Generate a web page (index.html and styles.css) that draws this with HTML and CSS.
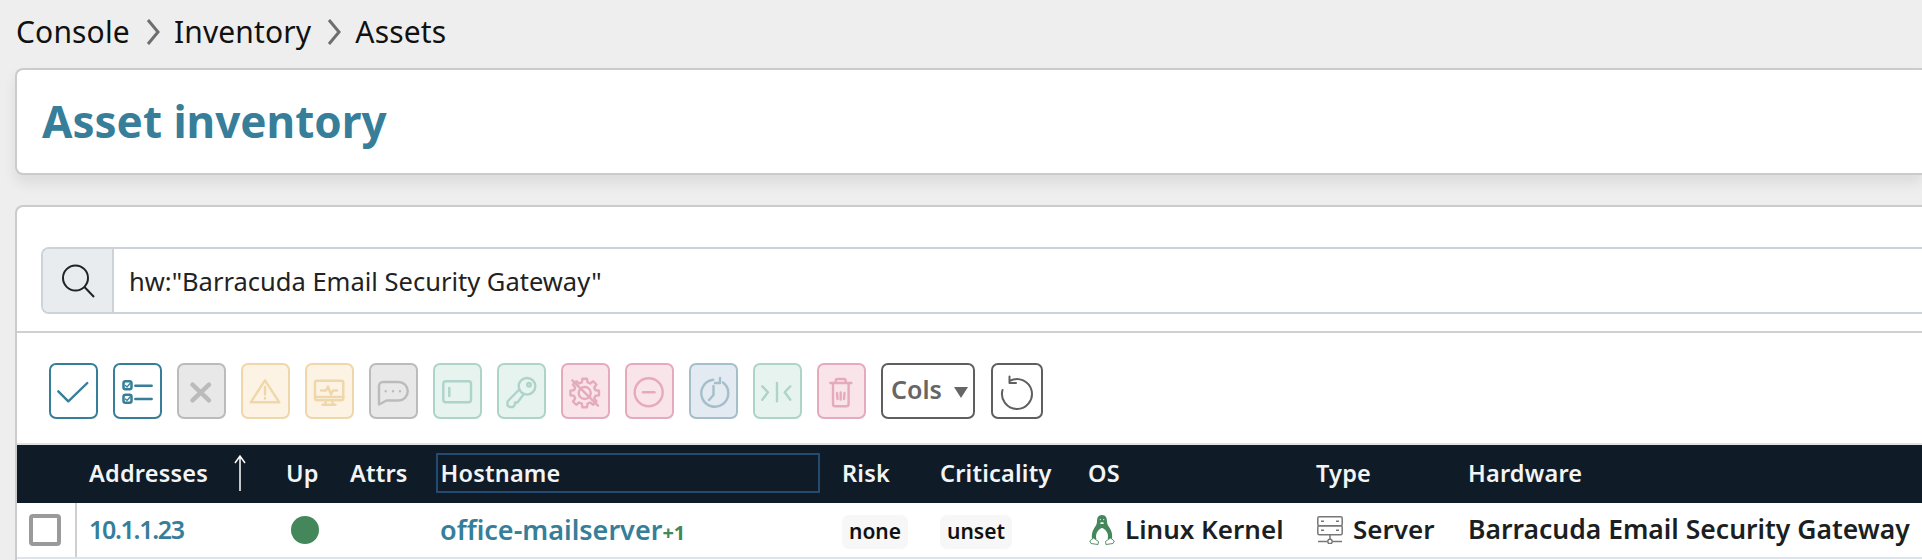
FILE: index.html
```html
<!DOCTYPE html>
<html lang="en">
<head>
<meta charset="utf-8">
<title>Asset inventory</title>
<link rel="stylesheet" href="styles.css">
</head>
<body>
<nav class="crumbs">
  <span>Console</span>
  <svg class="crumb-sep" viewBox="0 0 16 28"><path d="M3 2l10 12L3 26"/></svg>
  <span>Inventory</span>
  <svg class="crumb-sep" viewBox="0 0 16 28"><path d="M3 2l10 12L3 26"/></svg>
  <span>Assets</span>
</nav>
<header class="card title-card"><h1>Asset inventory</h1></header>
<main class="card main-card">
  <div class="search">
    <div class="search-addon">
      <svg viewBox="0 0 34 36" class="search-icon"><circle cx="14.5" cy="15" r="12.5"/><path d="M23.5 24L33 34"/></svg>
    </div>
    <div class="search-input">hw:"Barracuda Email Security Gateway"</div>
  </div>
  <div class="toolbar">
    <button class="tb teal"><svg viewBox="0 0 45 52"><path d="M7.3 26.3l10 10 19-18.300"/></svg></button>
    <button class="tb teal"><svg viewBox="0 0 45 52">
      <rect x="8.500" y="16.300" width="8" height="8" rx="2" class="thick"/><rect x="8.500" y="29.700" width="8" height="8" rx="2" class="thick"/>
      <path d="M10.500 20.500l1.500 1.500 3-3.500M10.500 34l1.500 1.500 3-3.500" class="thin"/>
      <path d="M20.300 20.700h16.400M20.300 34h16.400"/></svg></button>
    <button class="tb grey"><svg viewBox="0 0 45 52"><path d="M13.500 19.700l16.500 15.600M30 19.700L13.500 35.300" class="x"/></svg></button>
    <button class="tb amber"><svg viewBox="0 0 45 52"><path d="M22 15.300L36.300 37.300H7.700Z"/><path d="M22 22v7.500M22 33v.5"/></svg></button>
    <button class="tb amber"><svg viewBox="0 0 45 52"><rect x="8" y="15.700" width="28.300" height="19.600" rx="2"/><path d="M8 32h28.300M19 35.300l-1 4.400h8l-1-4.400M15.500 39.700h13M14 25.500h5l2-4 3 8 2-4h4"/></svg></button>
    <button class="tb grey"><svg viewBox="0 0 45 52"><path d="M8 21a4 4 0 0 1 4-4h15.500a9 9 0 0 1 0 18.500H15.500L8 39.500Z"/><path d="M14.700 26.300h.01M22 26.300h.01M29 26.300h.01"/></svg></button>
    <button class="tb green"><svg viewBox="0 0 45 52"><rect x="8.300" y="16.300" width="27.700" height="21" rx="2.500"/><path d="M14.300 23v8"/></svg></button>
    <button class="tb green"><svg viewBox="0 0 45 52"><circle cx="28" cy="21.300" r="8.300"/><circle cx="30" cy="19.800" r="1.800"/><path d="M20.200 24.500L8.500 36.500v4l2 1.500h3.500l2-2.500v-2h2.500l6.300-8.500"/></svg></button>
    <button class="tb pink"><svg viewBox="0 0 45 52"><path transform="translate(21.700 28)" d="M10.600-2.850L14.300-2.270 14.300 2.270 10.600 2.850 9.530 5.500 11.730 8.520 8.520 11.730 5.500 9.530 2.850 10.600 2.270 14.300-2.270 14.300-2.850 10.600-5.500 9.530-8.520 11.730-11.730 8.520-9.530 5.500-10.600 2.850-14.300 2.270-14.300-2.270-10.600-2.850-9.530-5.500-11.730-8.520-8.520-11.730-5.500-9.530-2.850-10.600-2.270-14.300 2.270-14.300 2.850-10.600 5.500-9.530 8.520-11.730 11.730-8.520 9.530-5.500Z"/><circle cx="21.700" cy="28" r="6"/><path d="M9.300 15.300L35 40.700"/></svg></button>
    <button class="tb pink"><svg viewBox="0 0 45 52"><circle cx="21.700" cy="27.300" r="14"/><path d="M16 27.300h11.500"/></svg></button>
    <button class="tb slate"><svg viewBox="0 0 45 52"><path d="M32 17.500a13.500 13.500 0 1 1-9.800-2.700"/><path d="M29 13v5h-5M22.500 21v9l-4.500 5"/></svg></button>
    <button class="tb green"><svg viewBox="0 0 45 52"><path d="M7.300 21.300l5.700 6-5.700 7.400M22 18v18.300M35.300 21.300l-5.600 6 5.600 7.400"/></svg></button>
    <button class="tb pink"><svg viewBox="0 0 45 52"><path d="M11.300 18h21M16.700 18v-2a2 2 0 0 1 2-2h6a2 2 0 0 1 2 2v2M14 18v21a2.300 2.300 0 0 0 2.300 2.300h11a2.300 2.300 0 0 0 2.300-2.300V18M18 28l.5 6M21.700 27.500v7M25.500 28l-.5 6"/></svg></button>
    <button class="cols">Cols<span class="caret"></span></button>
    <button class="reset"><svg viewBox="0 0 48 52"><path d="M17 15.700A15 15 0 1 1 9.500 25"/><path d="M16.500 11.500V18H23"/></svg></button>
  </div>
  <div class="grid head">
    <div></div>
    <div class="h-addr">Addresses<svg class="arrow" viewBox="0 0 14 38"><path d="M7 37V2M2 9l5-7 5 7"/></svg></div>
    <div>Up</div>
    <div>Attrs</div>
    <div class="h-focus">Hostname</div>
    <div>Risk</div>
    <div>Criticality</div>
    <div>OS</div>
    <div>Type</div>
    <div>Hardware</div>
  </div>
  <div class="grid row">
    <div class="c-check"><span class="checkbox"></span></div>
    <div class="link ip">10.1.1.23</div>
    <div><span class="dot"></span></div>
    <div></div>
    <div class="c-host"><span class="link">office-mailserver</span><span class="plus">+1</span></div>
    <div><span class="badge">none</span></div>
    <div><span class="badge">unset</span></div>
    <div class="with-icon">
      <svg class="tux" viewBox="0 0 26 30">
        <path class="tux-fill" d="M13 0C9 0 8 3 8 6.500 8 9.500 6.500 11 5 13.500 3 17 2.500 20 3 24L23 24C23.500 20 23 17 21 13.500 19.500 11 18 9.500 18 6.500 18 3 17 0 13 0Z"/>
        <path class="tux-belly" d="M13 13C10.500 13.500 7 17 7 21.500 7 25.500 9.500 27.500 13 27.500 16.500 27.500 19 25.500 19 21.500 19 17 15.500 13.500 13 13Z"/>
        <path class="tux-belly" d="M13 7.200c-1 0-2 .5-2 1s1 .8 2 .8 2-.3 2-.8-1-1-2-1z"/>
        <circle class="tux-belly" cx="11.300" cy="4.600" r=".6"/><circle class="tux-belly" cx="14.700" cy="4.600" r=".6"/>
        <path class="tux-foot" d="M4.500 23L.7 26 2 28.500 9 29.500 9.500 26.500ZM21.500 23L25.300 26 24 28.500 17 29.500 16.500 26.500Z"/>
      </svg>
      <span class="strong">Linux Kernel</span>
    </div>
    <div class="with-icon">
      <svg class="srv" viewBox="0 0 26 28"><rect x=".8" y=".8" width="24.400" height="9" rx="1.500"/><rect x=".8" y="9.800" width="24.400" height="9" rx="1.500"/><path d="M4 5.300h3M4 14.300h3M19 5.300h3M19 14.300h3M13 18.800v5M1 25.500h9M16 25.500h9"/><circle cx="13" cy="25.500" r="2.200"/></svg>
      <span class="strong">Server</span>
    </div>
    <div class="strong hw">Barracuda Email Security Gateway</div>
  </div>
</main>
</body>
</html>
```

FILE: styles.css
```css
* { box-sizing: border-box; }
html, body { margin: 0; height: 560px; overflow: hidden; }
body {
  background: #eeeeee;
  font-family: "Noto Sans", "Liberation Sans", sans-serif;
  color: #111;
  width: 1922px;
}
.crumbs {
  height: 68px;
  padding: 0 0 6px 16px;
  display: flex;
  align-items: center;
  font-size: 30px;
  letter-spacing: .15px;
}
.crumb-sep { width: 16px; height: 28px; margin: 2px 13px 0 15px; fill: none; stroke: #6e6e6e; stroke-width: 3px; }
.card {
  background: #fff;
  border: 2px solid #cbcbcb;
  border-right: 0;
  margin-left: 15px;
  border-radius: 8px 0 0 8px;
}
.title-card {
  height: 107px;
  box-shadow: 0 8px 14px rgba(0,0,0,.08);
  padding: 0 0 2px 25px;
  display: flex;
  align-items: center;
}
h1 { margin: 0; font-size: 44px; font-weight: 700; color: #367e99; line-height: 1; }
.main-card {
  margin-top: 30px;
  height: 360px;
  border-bottom: 0;
  border-radius: 8px 0 0 0;
  padding-top: 40px;
}
.search {
  margin-left: 24px;
  height: 67px;
  display: flex;
  border: 2px solid #ccd2d7;
  border-right: 0;
  border-radius: 8px 0 0 8px;
  overflow: hidden;
  font-size: 25.500px;
  color: #222;
}
.search-addon { width: 71px; background: #e9ecef; border-right: 2px solid #ccd2d7; display: flex; align-items: center; justify-content: center; }
.search-icon { width: 34px; height: 36px; fill: none; stroke: #1f2326; stroke-width: 2px; }
.search-input { padding-left: 15px; display: flex; align-items: center; }
.toolbar {
  margin-top: 17px;
  border-top: 2px solid #cfcfcf;
  padding: 30px 0 24px 32px;
  display: flex;
  gap: 15px;
}
.tb {
  width: 49px; height: 56px;
  padding: 0;
  border: 2px solid;
  border-radius: 7px;
  background: #fff;
  display: flex;
}
.tb svg { width: 45px; height: 52px; fill: none; stroke: currentColor; stroke-width: 2.400px; stroke-linecap: round; stroke-linejoin: round; }
.tb .x { stroke-width: 4.500px; }
.tb .thick { stroke-width: 2.500px; }
.tb .thin { stroke-width: 1.200px; }
.teal  { border-color: #367e99; color: #367e99; }
.grey  { border-color: #bbbbbb; color: #bbbbbb; background: #e8e8e8; }
.amber { border-color: #efd7a9; color: #efd7a9; background: #fdf3e4; }
.green { border-color: #aed4c9; color: #aed4c9; background: #e6f3ef; }
.pink  { border-color: #e5aabd; color: #e5aabd; background: #f9e4ea; }
.slate { border-color: #a5bfca; color: #a5bfca; background: #e3eaf1; }
.cols, .reset {
  height: 56px;
  border: 2px solid #5f5f5f;
  border-radius: 7px;
  background: #fff;
  color: #666;
  padding: 0;
}
.cols { width: 94px; display: flex; align-items: center; padding: 0 0 4px 8px; font: 600 25px "Noto Sans", sans-serif; }
.caret { width: 0; height: 0; margin: 6px 0 0 12px; border-left: 7px solid transparent; border-right: 7px solid transparent; border-top: 11px solid #666; }
.reset { width: 52px; margin-left: 1px; display: flex; }
.reset svg { width: 48px; height: 52px; fill: none; stroke: #5f5f5f; stroke-width: 2px; stroke-linecap: round; stroke-linejoin: round; }
.grid {
  display: grid;
  grid-template-columns: 60px 197px 64px 86px 406px 98px 148px 228px 152px 1fr;
  align-items: center;
}
.head {
  height: 60px;
  background: #0f1c27;
  border-top: 2px solid #e2e2e2;
  padding-bottom: 2px;
  color: #f2f4f6;
  font-size: 23.500px;
  font-weight: 600;
  letter-spacing: .2px;
}
.grid > div { padding-left: 12px; }
.head > div { white-space: nowrap; }
.h-addr { display: flex; align-items: center; }
.arrow { width: 14px; height: 38px; margin-left: 25px; fill: none; stroke: #fff; stroke-width: 1.500px; flex: none; }
.grid > .h-focus { height: 40px; margin: 0 10px 0 11.500px; padding-left: 3px; border: 2px solid #234a70; display: flex; align-items: center; }
.row { height: 56px; border-bottom: 2px solid #dee2ea; font-size: 26px; font-weight: 600; }
.c-check { height: 54px; border-right: 2px solid #cfcfcf; display: flex; align-items: center; }
.checkbox { display: block; width: 32px; height: 32px; border: 4px solid #9a9a9a; border-radius: 4px; background: #fff; }
.dot { display: block; width: 28px; height: 28px; border-radius: 50%; background: #43875a; margin-left: 5px; }
.link { color: #367e99; }
.grid > .ip { font-size: 25px; letter-spacing: -1.300px; padding-bottom: 2px; }
.grid > .c-host { padding: 0 0 2px 16px; white-space: nowrap; font-size: 27px; }
.plus { color: #43875a; font-size: 20px; font-weight: 700; }
.badge { display: inline-block; background: #f7f7f7; border-radius: 7px; padding: 0 7px; height: 34px; line-height: 32px; font-size: 21px; color: #111; }
.with-icon { display: flex; align-items: center; gap: 10px; }
.strong { color: #1c1f22; white-space: nowrap; padding-bottom: 2px; }
.hw { font-size: 26.500px; }
.tux { width: 26px; height: 30px; margin-left: 1px; flex: none; }
.tux-fill { fill: #43875a; }
.tux-belly { fill: #fff; }
.tux-foot { fill: #fff; stroke: #43875a; stroke-width: .9px; stroke-linejoin: round; }
.srv { width: 26px; height: 28px; margin-left: 1px; flex: none; fill: none; stroke: #777; stroke-width: 1.500px; }
```
